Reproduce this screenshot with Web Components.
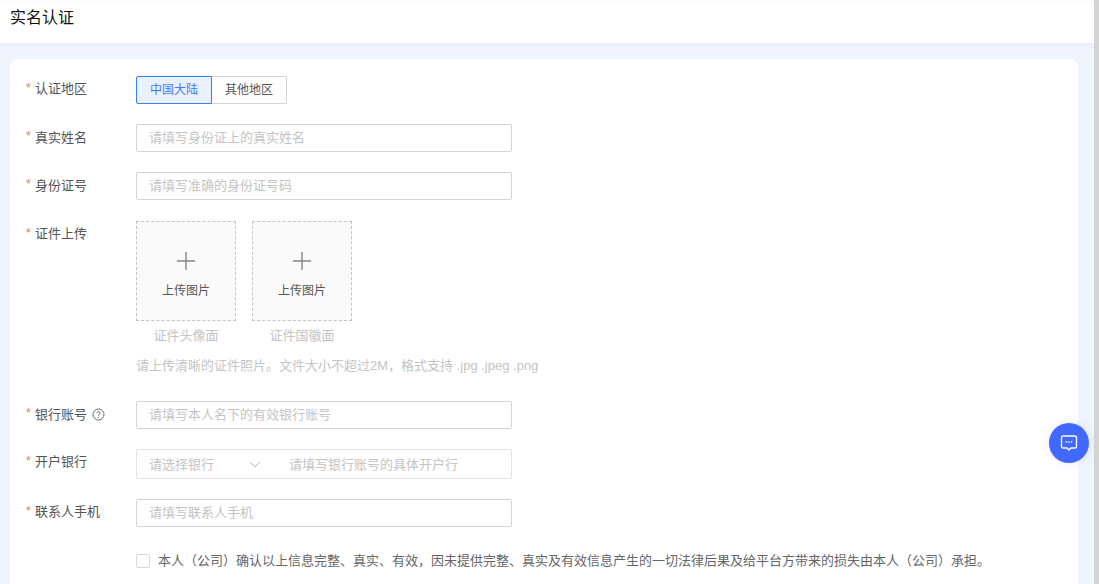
<!DOCTYPE html>
<html lang="zh">
<head>
<meta charset="utf-8">
<title>实名认证</title>
<style>
  html, body { margin: 0; height: 584px; overflow: hidden; }
  body { font-family: "Liberation Sans", "Noto Sans CJK SC", sans-serif; font-size: 13px; color: #555; }
</style>
</head>
<body>
<auth-page>
  <form-row label="认证地区" gap="20" raise><region-switch></region-switch></form-row>
  <form-row label="真实姓名" gap="20"><text-field placeholder="请填写身份证上的真实姓名"></text-field></form-row>
  <form-row label="身份证号" gap="21"><text-field placeholder="请填写准确的身份证号码"></text-field></form-row>
  <form-row label="证件上传" gap="26" raise>
    <upload-group hint="请上传清晰的证件照片。文件大小不超过2M，格式支持 .jpg .jpeg .png">
      <upload-box caption="证件头像面"></upload-box>
      <upload-box caption="证件国徽面"></upload-box>
    </upload-group>
  </form-row>
  <form-row label="银行账号" gap="20" help><text-field placeholder="请填写本人名下的有效银行账号"></text-field></form-row>
  <form-row label="开户银行" gap="20" raise><bank-field></bank-field></form-row>
  <form-row label="联系人手机" gap="26" raise><text-field placeholder="请填写联系人手机"></text-field></form-row>
  <agree-row>本人（公司）确认以上信息完整、真实、有效，因未提供完整、真实及有效信息产生的一切法律后果及给平台方带来的损失由本人（公司）承担。</agree-row>
</auth-page>
<chat-fab></chat-fab>
<script>
  class AuthPage extends HTMLElement {
    constructor() {
      super();
      this.attachShadow({ mode: "open" });
      this.shadowRoot.innerHTML = `
      <style>
        :host { display: flex; height: 584px; background: #f0f4fd; }
        .main { flex: 1; min-width: 0; display: flex; flex-direction: column; }
        .head {
          height: 43px; box-sizing: border-box; padding: 8px 10px 0;
          background: linear-gradient(#fafafa, #fff 6px);
          box-shadow: 0 2px 6px #e6ebf6;
          font-size: 16px; line-height: 20px; color: #111;
        }
        .card {
          flex: 1; margin: 16px 16px 0 10px; padding: 17px 16px 0;
          background: #fff; border-radius: 8px 8px 0 0;
        }
        .bar { width: 5px; background: #d4d4d4; }
      </style>
      <div class="main">
        <div class="head">实名认证</div>
        <div class="card"><slot></slot></div>
      </div>
      <div class="bar"></div>`;
    }
  }

  class FormRow extends HTMLElement {
    constructor() {
      super();
      this.attachShadow({ mode: "open" });
    }
    connectedCallback() {
      const help = this.hasAttribute("help") ? `
        <svg width="13" height="13" viewBox="0 0 13 13" fill="none" stroke="#666" stroke-width="1">
          <circle cx="6.5" cy="6.5" r="5.5"/>
          <path d="M4.9 5.2a1.6 1.6 0 1 1 2.500 1.300c-.6.4-.9.7-.9 1.300"/>
          <path d="M6.500 9v1"/>
        </svg>` : "";
      const height = this.hasAttribute("raise") ? 22 : 24;
      this.shadowRoot.innerHTML = `
      <style>
        :host { display: flex; margin-bottom: ${this.getAttribute("gap")}px; }
        .label { width: 110px; flex: none; display: flex; align-items: center; height: ${height}px; color: #555; }
        i { width: 9px; padding-top: ${this.hasAttribute("raise") ? 2 : 0}px; font-style: normal; color: #f56c6c; font-size: 12px; line-height: 14px; }
        span { margin-right: 5px; }
        svg { margin-top: 2px; }
      </style>
      <div class="label"><i>*</i><span>${this.getAttribute("label")}</span>${help}</div>
      <slot></slot>`;
    }
  }

  class RegionSwitch extends HTMLElement {
    constructor() {
      super();
      this.attachShadow({ mode: "open" });
      this.shadowRoot.innerHTML = `
      <style>
        :host { display: flex; height: 28px; font-size: 12px; line-height: 26px; }
        div { width: 75px; box-sizing: border-box; text-align: center; border: 1px solid #d4d4d4; color: #555; }
        .on { width: 76px; color: #3e7bfa; background: #e9f0fe; border-color: #3e7bfa; border-radius: 2px 0 0 2px; }
        .off { border-left: 0; border-radius: 0 2px 2px 0; }
      </style>
      <div class="on">中国大陆</div><div class="off">其他地区</div>`;
    }
  }

  class TextField extends HTMLElement {
    constructor() {
      super();
      this.attachShadow({ mode: "open" });
    }
    connectedCallback() {
      this.shadowRoot.innerHTML = `
      <style>
        :host {
          display: block; width: 376px; height: 28px; box-sizing: border-box;
          padding-left: 12px; border: 1px solid #d4d4d4; border-radius: 2px;
          line-height: 26px; color: #c4c4c4;
        }
      </style>
      ${this.getAttribute("placeholder")}`;
    }
  }

  class BankField extends HTMLElement {
    constructor() {
      super();
      this.attachShadow({ mode: "open" });
      this.shadowRoot.innerHTML = `
      <style>
        :host {
          display: flex; align-items: center; width: 376px; height: 30px; box-sizing: border-box;
          padding: 0 0 2px 12px; border: 1px solid #e2e2e2; border-radius: 2px; color: #c4c4c4;
        }
        .pick { width: 100px; }
        svg { flex: none; margin: 2px 28px 0 0; }
      </style>
      <span class="pick">请选择银行</span>
      <svg width="12" height="7" viewBox="0 0 12 7" fill="none" stroke="#b5b5b5"><path d="M1 1l5 5 5-5"/></svg>
      <span>请填写银行账号的具体开户行</span>`;
    }
  }

  class UploadGroup extends HTMLElement {
    constructor() {
      super();
      this.attachShadow({ mode: "open" });
    }
    connectedCallback() {
      this.shadowRoot.innerHTML = `
      <style>
        :host { display: block; }
        .boxes { display: flex; gap: 16px; }
        p { margin: 12px 0 0; height: 18px; line-height: 18px; font-size: 13px; color: #c4c4c4; }
      </style>
      <div class="boxes"><slot></slot></div>
      <p>${this.getAttribute("hint")}</p>`;
    }
  }

  class UploadBox extends HTMLElement {
    constructor() {
      super();
      this.attachShadow({ mode: "open" });
    }
    connectedCallback() {
      this.shadowRoot.innerHTML = `
      <style>
        :host { display: block; width: 100px; text-align: center; }
        .box {
          height: 100px; box-sizing: border-box; border: 1px dashed #c4c4c4; background: #fafafa;
          display: flex; flex-direction: column; align-items: center; padding-top: 29px;
        }
        svg { display: block; }
        .txt { margin-top: 12px; font-size: 12px; line-height: 16px; color: #555; }
        .cap { margin-top: 6px; line-height: 18px; color: #c4c4c4; }
      </style>
      <div class="box">
        <svg width="20" height="20" viewBox="0 0 20 20" stroke="#858585" stroke-width="1.4"><path d="M10 1v18M1 10h18"/></svg>
        <div class="txt">上传图片</div>
      </div>
      <div class="cap">${this.getAttribute("caption")}</div>`;
    }
  }

  class AgreeRow extends HTMLElement {
    constructor() {
      super();
      this.attachShadow({ mode: "open" });
      this.shadowRoot.innerHTML = `
      <style>
        :host { display: flex; align-items: center; margin-left: 110px; height: 16px; line-height: 16px; color: #666; white-space: nowrap; }
        b { width: 14px; height: 14px; box-sizing: border-box; margin-right: 8px; border: 1px solid #d8d8d8; border-radius: 2px; background: #fff; }
      </style>
      <b></b><slot></slot>`;
    }
  }

  class ChatFab extends HTMLElement {
    constructor() {
      super();
      this.attachShadow({ mode: "open" });
      this.shadowRoot.innerHTML = `
      <style>
        :host {
          position: fixed; left: 1049px; top: 423px; width: 40px; height: 40px; border-radius: 50%;
          display: flex; align-items: center; justify-content: center;
          background: #4169ff; box-shadow: 0 0 10px #4169ff22;
        }
      </style>
      <svg width="18" height="18" viewBox="0 0 18 18" fill="none" stroke="#fff" stroke-width="1.3">
        <path d="M3 2h12a1.500 1.500 0 0 1 1.500 1.500v9A1.500 1.500 0 0 1 15 14h-4l-2 2-2-2H3a1.500 1.500 0 0 1-1.500-1.500v-9A1.500 1.500 0 0 1 3 2z"/>
        <path d="M5.800 8h1.300M8.350 8h1.300M10.900 8h1.300" stroke-width="1.600"/>
      </svg>`;
    }
  }

  customElements.define("auth-page", AuthPage);
  customElements.define("form-row", FormRow);
  customElements.define("region-switch", RegionSwitch);
  customElements.define("text-field", TextField);
  customElements.define("bank-field", BankField);
  customElements.define("upload-group", UploadGroup);
  customElements.define("upload-box", UploadBox);
  customElements.define("agree-row", AgreeRow);
  customElements.define("chat-fab", ChatFab);
</script>
</body>
</html>
